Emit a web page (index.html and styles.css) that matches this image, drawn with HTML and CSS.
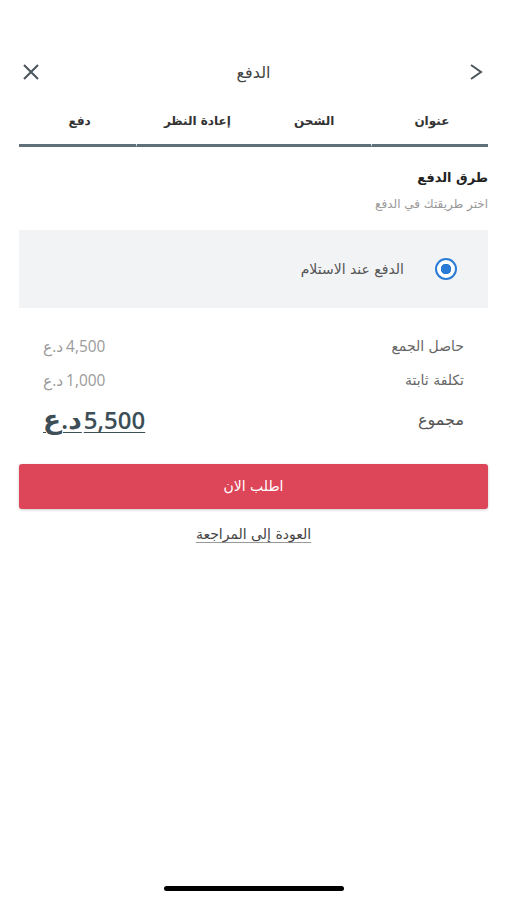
FILE: index.html
```html
<!DOCTYPE html>
<html lang="ar" dir="rtl">
<head>
    <meta charset="utf-8">
    <title>الدفع</title>
    <link rel="stylesheet" href="styles.css">
</head>
<body>
<div class="screen">
    <div class="header">
        <div class="icon back">
            <svg width="14" height="18" viewBox="0 0 14 18"><path d="M2 2 L12 9 L2 16" fill="none" stroke="#4a555b" stroke-width="2"/></svg>
        </div>
        <div class="title">الدفع</div>
        <div class="icon close">
            <svg width="18" height="18" viewBox="0 0 18 18"><path d="M2 2 L16 16 M16 2 L2 16" fill="none" stroke="#4a555b" stroke-width="2"/></svg>
        </div>
    </div>

    <div class="tabs">
        <div class="tab">عنوان</div>
        <div class="tab mid">الشحن</div>
        <div class="tab">إعادة النظر</div>
        <div class="tab">دفع</div>
    </div>

    <div class="section">
        <h2 class="s_title">طرق الدفع</h2>
        <p class="s_sub">اختر طريقتك في الدفع</p>
    </div>

    <div class="method">
        <span class="radio"></span>
        <span class="m_name">الدفع عند الاستلام</span>
    </div>

    <div class="summary">
        <div class="row">
            <span class="label">حاصل الجمع</span>
            <span class="value"><span class="num">4,500</span><span class="cur">د.ع</span></span>
        </div>
        <div class="row">
            <span class="label">تكلفة ثابتة</span>
            <span class="value"><span class="num">1,000</span><span class="cur">د.ع</span></span>
        </div>
        <div class="row total">
            <span class="label">مجموع</span>
            <span class="value"><span class="num">5,500</span><span class="cur">د.ع</span></span>
        </div>
    </div>

    <div class="order">اطلب الان</div>
    <div class="backlink"><a href="#">العودة إلى المراجعة</a></div>

    <div class="home"></div>
</div>
</body>
</html>
```

FILE: styles.css
```css
*{
    padding: 0;
    margin: 0;
    box-sizing: border-box;
}
html,body{
    height: 100%;
    background: #ffffff;
}
body{
    font-family: "Liberation Sans", "DejaVu Sans", sans-serif;
    color: #333;
}
.screen{
    position: relative;
    height: 900px;
    padding: 52px 19px 0;
    overflow: hidden;
}
.header{
    display: flex;
    align-items: center;
    justify-content: space-between;
    height: 40px;
}
.icon{
    width: 24px;
    display: flex;
    justify-content: center;
}
.title{
    font-family: "DejaVu Sans", sans-serif;
    font-size: 16px;
    color: #444;
}
.tabs{
    display: grid;
    grid-template-columns: repeat(4, 1fr);
    margin-top: 13px;
}
.tab{
    text-align: center;
    font-family: "DejaVu Sans", sans-serif;
    font-size: 12px;
    font-weight: bold;
    color: #333;
    height: 42px;
    padding-top: 9px;
    padding-left: 4px;
    border-bottom: 3px solid #5f7079;
    border-left: 1px solid #fff;
}
.tab.mid,
.tab:last-child{
    border-left: none;
}
.section{
    margin-top: 20px;
}
.s_title{
    font-family: "DejaVu Sans", sans-serif;
    font-size: 13px;
    font-weight: bold;
    color: #222;
    line-height: 22px;
}
.s_sub{
    font-family: "DejaVu Sans", sans-serif;
    font-size: 12px;
    color: #999;
    margin-top: 8px;
}
.method{
    display: flex;
    align-items: center;
    height: 78px;
    margin-top: 19px;
    padding-right: 31px;
    background: #f2f3f5;
}
.radio{
    width: 22px;
    height: 22px;
    border-radius: 50%;
    border: 2.5px solid #2a7bd6;
    background: radial-gradient(circle, #2a7bd6 0 5px, #fff 5.5px);
}
.m_name{
    font-family: "DejaVu Sans", sans-serif;
    font-size: 14px;
    color: #555;
    margin-right: 31px;
}
.summary{
    margin-top: 21px;
    padding: 0 24px;
}
.row{
    display: flex;
    justify-content: space-between;
    align-items: center;
    height: 34px;
}
.label{
    font-family: "DejaVu Sans", sans-serif;
    font-size: 14px;
    color: #666;
}
.value{
    font-family: "Open Sans", "DejaVu Sans", sans-serif;
    font-size: 14px;
    color: #9a9a9a;
}
.num{
    font-size: 1.1em;
    letter-spacing: 2px;
    margin-left: 3px;
}
.cur{
    font-size: 1.1em;
}
.row.total{
    height: 44px;
}
.total .label{
    font-size: 16px;
    color: #555;
}
.total .value{
    font-size: 24px;
    font-weight: 600;
    color: #3d4e57;
    text-decoration: underline;
    text-decoration-thickness: 1px;
    text-underline-offset: 3px;
}
.total .num{
    font-size: 1em;
    letter-spacing: 1.5px;
    margin-left: 2px;
}
.order{
    margin-top: 23px;
    height: 45px;
    line-height: 45px;
    background: #dd4558;
    border-radius: 3px;
    box-shadow: 0 1px 3px rgba(0, 0, 0, 0.2);
    text-align: center;
    font-family: "DejaVu Sans", sans-serif;
    font-size: 14px;
    color: #fff;
}
.backlink{
    text-align: center;
    margin-top: 16px;
}
.backlink a{
    font-family: "DejaVu Sans", sans-serif;
    font-size: 14px;
    color: #444;
    text-decoration: underline;
    text-decoration-color: #999;
    text-underline-offset: 3px;
}
.home{
    position: absolute;
    left: 164px;
    bottom: 9px;
    width: 180px;
    height: 5px;
    border-radius: 3px;
    background: #000;
}
```
